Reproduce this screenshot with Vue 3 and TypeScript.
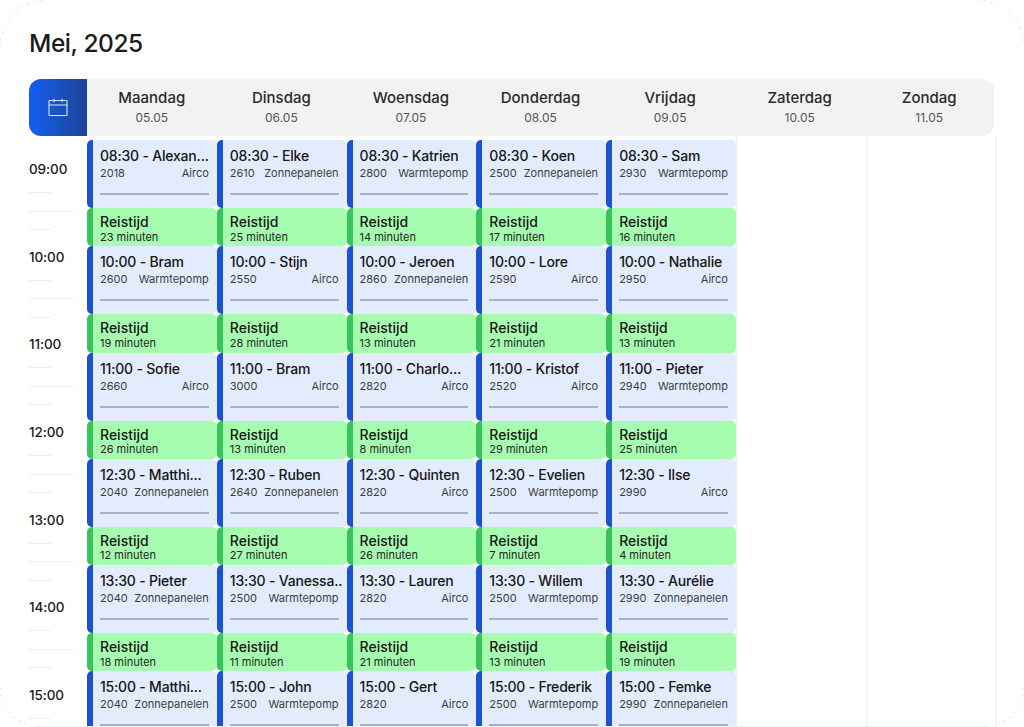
<script setup lang="ts">
interface Visit { time: string; name: string; zip: string; kind: string }
interface Day { name: string; date: string; visits: Visit[]; travel: number[] }

const v = (time: string, name: string, zip: string, kind: string): Visit => ({ time, name, zip, kind })

const days: Day[] = [
  { name: 'Maandag', date: '05.05', travel: [23, 19, 26, 12, 18], visits: [
    v('08:30', 'Alexan...', '2018', 'Airco'), v('10:00', 'Bram', '2600', 'Warmtepomp'), v('11:00', 'Sofie', '2660', 'Airco'),
    v('12:30', 'Matthi...', '2040', 'Zonnepanelen'), v('13:30', 'Pieter', '2040', 'Zonnepanelen'), v('15:00', 'Matthi...', '2040', 'Zonnepanelen') ] },
  { name: 'Dinsdag', date: '06.05', travel: [25, 28, 13, 27, 11], visits: [
    v('08:30', 'Elke', '2610', 'Zonnepanelen'), v('10:00', 'Stijn', '2550', 'Airco'), v('11:00', 'Bram', '3000', 'Airco'),
    v('12:30', 'Ruben', '2640', 'Zonnepanelen'), v('13:30', 'Vanessa..', '2500', 'Warmtepomp'), v('15:00', 'John', '2500', 'Warmtepomp') ] },
  { name: 'Woensdag', date: '07.05', travel: [14, 13, 8, 26, 21], visits: [
    v('08:30', 'Katrien', '2800', 'Warmtepomp'), v('10:00', 'Jeroen', '2860', 'Zonnepanelen'), v('11:00', 'Charlo...', '2820', 'Airco'),
    v('12:30', 'Quinten', '2820', 'Airco'), v('13:30', 'Lauren', '2820', 'Airco'), v('15:00', 'Gert', '2820', 'Airco') ] },
  { name: 'Donderdag', date: '08.05', travel: [17, 21, 29, 7, 13], visits: [
    v('08:30', 'Koen', '2500', 'Zonnepanelen'), v('10:00', 'Lore', '2590', 'Airco'), v('11:00', 'Kristof', '2520', 'Airco'),
    v('12:30', 'Evelien', '2500', 'Warmtepomp'), v('13:30', 'Willem', '2500', 'Warmtepomp'), v('15:00', 'Frederik', '2500', 'Warmtepomp') ] },
  { name: 'Vrijdag', date: '09.05', travel: [16, 13, 25, 4, 19], visits: [
    v('08:30', 'Sam', '2930', 'Warmtepomp'), v('10:00', 'Nathalie', '2950', 'Airco'), v('11:00', 'Pieter', '2940', 'Warmtepomp'),
    v('12:30', 'Ilse', '2990', 'Airco'), v('13:30', 'Aurélie', '2990', 'Zonnepanelen'), v('15:00', 'Femke', '2990', 'Zonnepanelen') ] },
  { name: 'Zaterdag', date: '10.05', travel: [], visits: [] },
  { name: 'Zondag', date: '11.05', travel: [], visits: [] },
]

const hours = ['09:00', '10:00', '11:00', '12:00', '13:00', '14:00', '15:00']
</script>

<template>
  <div class="page">
    <h1 class="title">Mei, 2025</h1>

    <div class="head">
      <div class="cal">
        <svg width="20" height="20" viewBox="0 0 20 20" fill="none" stroke="#d5e2fb" stroke-width="1.1">
          <rect x="1" y="2.5" width="18" height="15" rx="0.8" />
          <path d="M1 7h18M6 0.8v3.4M14 0.8v3.4" />
        </svg>
      </div>
      <div v-for="d in days" :key="d.name" class="day">
        <span class="day-name">{{ d.name }}</span>
        <span class="day-date">{{ d.date }}</span>
      </div>
    </div>

    <div class="body">
      <div class="rail">
        <div v-for="h in hours" :key="h" class="slot">
          <span class="hour">{{ h }}</span>
          <i class="tick short"></i>
          <i class="tick long"></i>
          <i class="tick short"></i>
        </div>
      </div>

      <div v-for="d in days" :key="d.name" class="col">
        <template v-for="(visit, i) in d.visits" :key="visit.time">
          <div class="visit">
            <div class="visit-title">{{ visit.time }} - {{ visit.name }}</div>
            <div class="visit-meta">
              <span>{{ visit.zip }}</span>
              <span>{{ visit.kind }}</span>
            </div>
            <div class="visit-bar"></div>
          </div>
          <div v-if="i < d.travel.length" class="travel">
            <div class="travel-title">Reistijd</div>
            <div class="travel-time">{{ d.travel[i] }} minuten</div>
          </div>
        </template>
      </div>
    </div>

    <svg class="corners" width="1024" height="727" viewBox="0 0 1024 727" fill="none">
      <g stroke="#d3dcec" stroke-width="1" stroke-dasharray="1.5 5">
        <path d="M0.5 46A46 46 0 0 1 46 0.5" />
        <path d="M978 0.5A45 45 0 0 1 1023.5 46" />
        <path d="M1023.5 688A39 39 0 0 1 985 726.5" />
        <path d="M0.5 688A39 39 0 0 0 39 726.5" />
      </g>
      <path d="M39 726.5H985" stroke="#edf2fa" stroke-width="1" />
    </svg>
  </div>
</template>

<style>
html, body { margin: 0; background: #fff; }
</style>

<style scoped>
.page {
  position: relative;
  box-sizing: border-box;
  width: 1024px;
  height: 727px;
  padding: 29px 30px 0 29px;
  overflow: hidden;
  background: #fff;
  color: #1b1b1b;
  font-family: Inter, "Liberation Sans", sans-serif;
}
.title {
  margin: 0 0 21px;
  height: 29px;
  font-size: 24.5px;
  line-height: 29px;
  font-weight: 500;
  letter-spacing: -0.45px;
}
.head {
  display: flex;
  height: 57px;
  border-radius: 12px;
  background: #f2f2f2;
}
.cal {
  flex: 0 0 58px;
  display: flex;
  align-items: center;
  justify-content: center;
  border-radius: 12px 0 0 12px;
  background: linear-gradient(90deg, #145ff0, #1c4496);
}
.day {
  flex: 1 1 0;
  min-width: 0;
  display: flex;
  flex-direction: column;
  align-items: center;
  padding-top: 10px;
}
.day-name {
  font-size: 15px;
  line-height: 18px;
  font-weight: 500;
  color: #2a2a2a;
}
.day-date {
  margin-top: 3px;
  font-size: 12px;
  line-height: 16px;
  color: #555;
}
.body {
  display: flex;
  height: 591px;
  margin-right: -1.5px;
}
.rail {
  flex: 0 0 58px;
  padding-top: 24px;
}
.slot {
  display: flex;
  flex-direction: column;
  height: 87.7px;
}
.hour {
  font-size: 13.5px;
  line-height: 18px;
  font-weight: 500;
  letter-spacing: -0.1px;
}
.tick {
  display: block;
  height: 1px;
  background: #efefef;
  margin-top: 17.5px;
}
.tick:nth-of-type(1) { margin-top: 14px; }
.tick.short { width: 23px; }
.tick.long { width: 45px; }
.col {
  flex: 1 1 0;
  min-width: 0;
  padding-top: 4px;
  box-shadow: 1.5px 0 0 #f3f3f3;
}
.visit {
  box-sizing: border-box;
  height: 68px;
  padding: 6px 8px 0 7px;
  border-left: 6px solid #1a52cf;
  border-radius: 5px;
  background: #e3ecfd;
}
.visit-title {
  font-size: 14px;
  line-height: 19px;
  font-weight: 500;
  letter-spacing: -0.2px;
  color: #161616;
  white-space: nowrap;
}
.visit-meta {
  display: flex;
  justify-content: space-between;
  font-size: 11px;
  line-height: 16px;
  color: #3c3c3c;
  white-space: nowrap;
}
.visit-bar {
  height: 2px;
  margin-top: 12px;
  background: #a9b0bf;
}
.travel {
  box-sizing: border-box;
  height: 38.3px;
  padding: 5px 8px 0 7px;
  border-left: 6px solid #39c45b;
  border-radius: 5px;
  background: #a6fdb0;
}
.travel-title {
  font-size: 14px;
  line-height: 18px;
  font-weight: 500;
  color: #161616;
}
.travel-time {
  margin-top: -1.5px;
  font-size: 11px;
  line-height: 14px;
  color: #232323;
}
.corners {
  position: absolute;
  inset: 0;
  pointer-events: none;
}
</style>
